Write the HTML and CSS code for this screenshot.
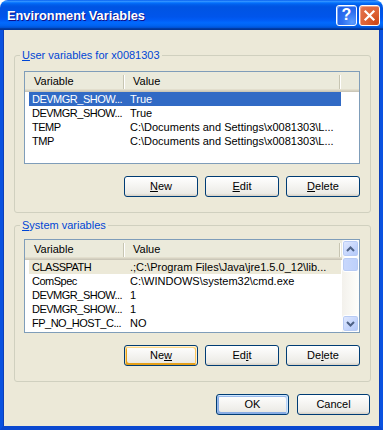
FILE: index.html
```html
<!DOCTYPE html>
<html>
<head>
<meta charset="utf-8">
<link rel="stylesheet" href="styles.css">
</head>
<body>
<div class="window">
  <div class="titlebar">
    <span class="title">Environment Variables</span>
    <div class="caption-btns">
      <div class="cap help">?</div>
      <div class="cap close">
        <svg width="13" height="13" viewBox="0 0 13 13"><path d="M2.5 2.5 L10.5 10.5 M10.5 2.5 L2.5 10.5" stroke="#fff" stroke-width="2.2" stroke-linecap="square" fill="none"/></svg>
      </div>
    </div>
  </div>
  <div class="client">
    <fieldset class="group user">
      <legend><u>U</u>ser variables for x0081303</legend>
      <div class="list">
        <div class="lv-main">
          <div class="hdr">
            <div class="hc c1">Variable</div>
            <div class="hc c2">Value</div>
            <div class="hc fill"></div>
          </div>
          <div class="rows">
            <div class="row sel"><span class="v1">DEVMGR_SHOW...</span><span class="v2">True</span></div>
            <div class="row"><span class="v1">DEVMGR_SHOW...</span><span class="v2">True</span></div>
            <div class="row"><span class="v1">TEMP</span><span class="v2">C:\Documents and Settings\x0081303\L...</span></div>
            <div class="row"><span class="v1">TMP</span><span class="v2">C:\Documents and Settings\x0081303\L...</span></div>
          </div>
        </div>
      </div>
      <div class="btn-row">
        <div class="btn"><u>N</u>ew</div>
        <div class="btn"><u>E</u>dit</div>
        <div class="btn"><u>D</u>elete</div>
      </div>
    </fieldset>
    <fieldset class="group sys">
      <legend><u>S</u>ystem variables</legend>
      <div class="list">
        <div class="lv-main">
          <div class="hdr">
            <div class="hc c1">Variable</div>
            <div class="hc c2">Value</div>
          </div>
          <div class="rows">
            <div class="row selu"><span class="v1">CLASSPATH</span><span class="v2">.;C:\Program Files\Java\jre1.5.0_12\lib...</span></div>
            <div class="row"><span class="v1">ComSpec</span><span class="v2">C:\WINDOWS\system32\cmd.exe</span></div>
            <div class="row"><span class="v1">DEVMGR_SHOW...</span><span class="v2">1</span></div>
            <div class="row"><span class="v1">DEVMGR_SHOW...</span><span class="v2">1</span></div>
            <div class="row"><span class="v1">FP_NO_HOST_C...</span><span class="v2">NO</span></div>
          </div>
        </div>
        <div class="vscroll">
          <div class="sbtn">
            <svg width="9" height="6" viewBox="0 0 9 6"><path d="M1 5 L4.5 1.5 L8 5" stroke="#4d6185" stroke-width="2" fill="none"/></svg>
          </div>
          <div class="thumb"></div>
          <div class="track"></div>
          <div class="sbtn">
            <svg width="9" height="6" viewBox="0 0 9 6"><path d="M1 1 L4.5 4.5 L8 1" stroke="#4d6185" stroke-width="2" fill="none"/></svg>
          </div>
        </div>
      </div>
      <div class="btn-row">
        <div class="btn hot">Ne<u>w</u></div>
        <div class="btn">Ed<u>i</u>t</div>
        <div class="btn">De<u>l</u>ete</div>
      </div>
    </fieldset>
    <div class="dlg-row">
      <div class="btn wide def">OK</div>
      <div class="btn wide">Cancel</div>
    </div>
  </div>
</div>
</body>
</html>
```
FILE: styles.css
```css
html, body {
  margin: 0;
  padding: 0;
  background: #ffffff;
}
body {
  font-family: "Liberation Sans", Arial, sans-serif;
  font-size: 11px;
  color: #000;
}
.window {
  width: 383px;
  height: 430px;
  display: flex;
  flex-direction: column;
  box-sizing: border-box;
}
.titlebar {
  height: 30px;
  flex: none;
  display: flex;
  align-items: center;
  padding: 0 3px 0 7px;
  box-sizing: border-box;
  border-radius: 8px 8px 0 0;
  background: linear-gradient(180deg, #0058ee 0%, #3593ff 4%, #288eff 6%, #127dff 8%, #036ffc 10%, #0262ee 14%, #0057e5 20%, #0054e3 24%, #0055eb 56%, #005bf5 66%, #026afe 76%, #0062ef 86%, #0052d6 92%, #0040ab 94%, #003092 100%);
}
.title {
  flex: 1;
  color: #fff;
  font-weight: bold;
  font-size: 12.8px;
  text-shadow: 1px 1px #0f1089;
  white-space: nowrap;
  padding-top: 1px;
}
.caption-btns {
  display: flex;
  gap: 2px;
}
.cap {
  width: 21px;
  height: 21px;
  box-sizing: border-box;
  border: 1px solid #fff;
  border-radius: 3px;
  display: flex;
  align-items: center;
  justify-content: center;
}
.help {
  background: radial-gradient(circle at 80% 85%, #5a9cff 0%, #2e6ff0 45%, #1a5ae6 100%);
  box-shadow: inset 1px 1px #7eaaf8;
  color: #fff;
  font-weight: bold;
  font-size: 16px;
  font-family: "Liberation Sans", Arial, sans-serif;
  line-height: 1;
}
.close {
  background: radial-gradient(circle at 85% 90%, #cc4616 0%, #dc6032 40%, #e37552 100%);
  box-shadow: inset 1px 1px #f0a48a;
}
.client {
  flex: 1;
  background: #ece9d8;
  border-left: 3px solid #0a52e0;
  border-right: 3px solid #0a52e0;
  border-bottom: 4px solid #0a48d0;
  box-shadow: inset 1px 0 #0d3fb8, inset -1px 0 #0d3fb8;
  display: flex;
  flex-direction: column;
  padding: 19px 9px 0 11px;
}
.group {
  margin: 0;
  border: 1px solid #d0d0bf;
  border-radius: 3px;
  padding: 9px 10px 15px 9px;
  min-width: 0;
}
.group legend {
  color: #0046d5;
  padding: 0 2px;
  margin-left: -4px;
  line-height: 13px;
  font-size: 11px;
}
.group.sys {
  margin-top: 6px;
  padding-top: 7px;
}
.list {
  height: 93px;
  box-sizing: border-box;
  border: 1px solid #7f9db9;
  background: #fff;
  display: flex;
  overflow: hidden;
}
.sys .list {
  height: 94px;
}
.lv-main {
  flex: 1;
  min-width: 0;
}
.hdr {
  height: 20px;
  display: flex;
  background: #ebeadb;
  box-shadow: inset 0 -1px #cbc7b8, inset 0 -2px #d6d2c2, inset 0 -3px #e2decd;
}
.hc {
  box-sizing: border-box;
  line-height: 19px;
  white-space: nowrap;
  background-image: linear-gradient(#c7c5b2, #c7c5b2), linear-gradient(#fff, #fff);
  background-repeat: no-repeat;
  background-size: 1px 14px, 1px 14px;
  background-position: right 1px top 3px, right 0 top 3px;
}
.hc.c1 {
  width: 100px;
  padding-left: 9px;
}
.hc.c2 {
  width: 216px;
  padding-left: 8px;
}
.hc.fill {
  flex: 1;
  background: none;
}
.row {
  display: flex;
  height: 14px;
  line-height: 14px;
  width: 312px;
  margin-left: 4px;
  white-space: nowrap;
  overflow: hidden;
}
.row .v1 {
  width: 96px;
  flex: none;
  padding-left: 3px;
  box-sizing: border-box;
  letter-spacing: -0.5px;
}
.row .v2 {
  padding-left: 5px;
}
.row.sel {
  background: #316ac5;
  color: #fff;
}
.row.selu {
  background: #ece9d8;
}
.vscroll {
  width: 17px;
  flex: none;
  display: flex;
  flex-direction: column;
  background: linear-gradient(90deg, #f3f1ec, #fefefb);
}
.sbtn {
  height: 17px;
  box-sizing: border-box;
  border: 1px solid #fff;
  border-radius: 3px;
  background: linear-gradient(135deg, #e2eafe, #c3d4fc 60%, #b1c7f8);
  box-shadow: inset 0 0 0 1px #b8cbf4;
  display: flex;
  align-items: center;
  justify-content: center;
}
.thumb {
  height: 15px;
  box-sizing: border-box;
  border: 1px solid #fff;
  border-radius: 3px;
  background: linear-gradient(90deg, #c9d8fc, #bcd0fb);
  box-shadow: inset 0 0 0 1px #b8cbf4;
}
.track {
  flex: 1;
}
.btn-row {
  display: flex;
  justify-content: flex-end;
  gap: 7px;
  margin-top: 12px;
}
.btn {
  width: 74px;
  height: 21px;
  box-sizing: border-box;
  border: 1px solid #003c74;
  border-radius: 3px;
  background: linear-gradient(180deg, #fff, #ecebe6 86%, #d6d0c5);
  display: flex;
  align-items: center;
  justify-content: center;
  line-height: 13px;
}
.btn.hot {
  box-shadow: inset -1px 1px #fff0cf, inset 1px 2px #fdd889, inset -2px 2px #fbc761, inset 2px -2px #e5a01a;
}
.btn.def {
  box-shadow: inset -1px 1px #cee7ff, inset 1px 2px #98b8ea, inset -2px 2px #bcd4f6, inset 1px -1px #89ade4, inset 2px -2px #89ade4;
}
.dlg-row {
  display: flex;
  justify-content: flex-end;
  gap: 8px;
  margin-top: 12px;
  padding-right: 1px;
}
.btn.wide {
  width: 73px;
}
u {
  text-decoration: underline;
  text-underline-offset: 1px;
}
```
